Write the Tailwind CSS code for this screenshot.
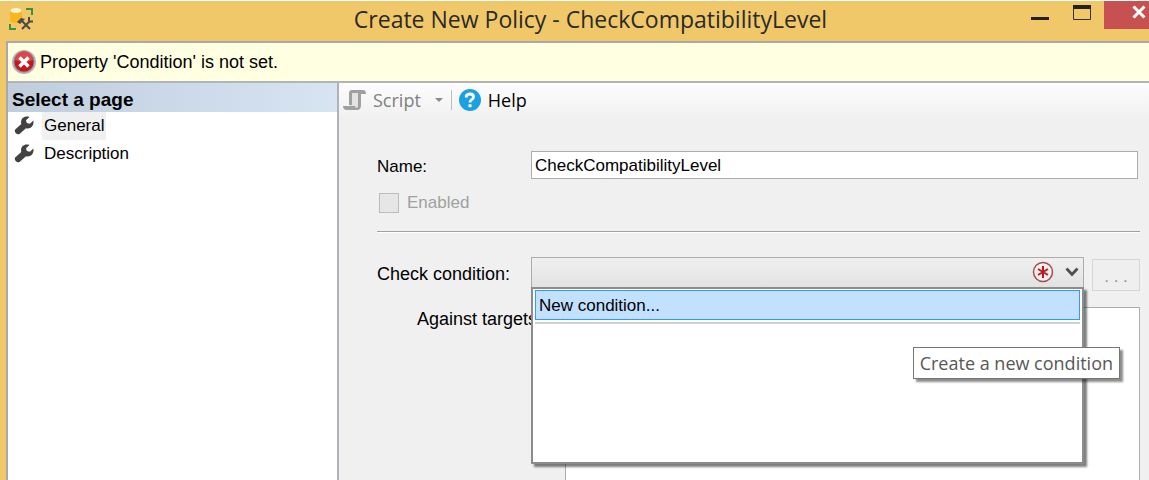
<!DOCTYPE html>
<html lang="en">
<head>
<meta charset="utf-8">
<title>Create New Policy - CheckCompatibilityLevel</title>
<script src="https://cdn.jsdelivr.net/npm/@tailwindcss/browser@4"></script>
</head>
<body class="flex h-screen flex-col overflow-hidden border-t border-white bg-[#f0c869] font-['Liberation_Sans',Arial,sans-serif] text-[17px] leading-5 text-black">
  <header class="flex h-10 shrink-0 items-start">
    <svg class="ml-2 mt-1.5 h-6 w-7 shrink-0" viewBox="0 0 28 24" fill="none" aria-hidden="true">
      <path d="M2 4v9c0 2 2.500 3 6 3s6-1 6-3V4z" fill="#f8b71f"/>
      <ellipse cx="8" cy="3.500" rx="5.500" ry="2.500" fill="#fff3d2"/>
      <path d="M18 2h6v6M2 17v5h6" stroke="#3d9142" stroke-width="2"/>
      <path d="M14 22l8-8M14 14l8 8" stroke="#4a4a48" stroke-width="2"/>
      <path d="M9 15l4-4 4 1-5 5z" fill="#4a4a48"/>
      <path d="M21 10v4.500h4" stroke="#4a4a48" stroke-width="2"/>
    </svg>
    <h1 class="flex-1 pl-[125px] text-center font-['Open_Sans','Noto_Sans',sans-serif] text-[23px] leading-9 text-[#2b2a27]">Create New Policy - CheckCompatibilityLevel</h1>
    <div class="flex shrink-0 items-start">
      <button class="flex h-7 w-10 justify-center" aria-label="Minimize"><svg class="h-7 w-5" viewBox="0 0 20 28"><path d="M1 16h18v3H1z" fill="#222"/></svg></button>
      <button class="flex h-7 w-11 justify-center" aria-label="Maximize"><svg class="h-7 w-5" viewBox="0 0 20 28"><path d="M1.500 5.500h17v13h-17z" fill="none" stroke="#333"/><path d="M1 4h18v4H1z" fill="#222"/></svg></button>
      <button class="flex h-7 w-[45px] items-start justify-end bg-[#c75050] pr-0.5" aria-label="Close"><svg class="h-6 w-4" viewBox="0 0 16 24"><path d="M2.500 5.500l11 11M13.500 5.500l-11 11" stroke="#fff" stroke-width="3"/></svg></button>
    </div>
  </header>

  <div class="ml-1.5 flex min-h-0 flex-1 flex-col border-l-2 border-t-2 border-[#a9a9ac] bg-[#f0f0f0]">
    <div class="flex h-10 shrink-0 items-center gap-1 border-b-2 border-[#b4b4b8] bg-[#ffffe1] pl-1 text-lg leading-5" role="alert">
      <svg class="size-6 shrink-0" viewBox="0 0 24 24" aria-hidden="true">
        <circle cx="12" cy="12" r="12" fill="#b4b4b4"/><circle cx="12" cy="12" r="10.500" fill="#8c8c8c"/>
        <circle cx="12" cy="12" r="9.500" fill="#c4161c"/><path d="M3 10a9 9 0 0 1 18 0q-9 4-18 0z" fill="#d8484c"/>
        <path d="M7.500 7.500l9 9M16.500 7.500l-9 9" stroke="#fff" stroke-width="3.500"/>
      </svg>
      <p>Property 'Condition' is not set.</p>
    </div>

    <div class="flex min-h-0 flex-1">
      <nav class="w-[331px] shrink-0 border-r-2 border-[#b0b2b8] bg-white">
        <h2 class="flex h-[29px] items-center bg-linear-to-r from-[#c0cddd] to-[#d7e4f2] pl-1 pt-1 text-[19px] font-bold">Select a page</h2>
        <ul>
          <li><a href="#general" class="flex h-7 items-center gap-2 pl-1.5"><svg class="size-5" viewBox="0 0 20 20" aria-hidden="true"><path d="M15.500 1C10-.800 6 3 7.300 8L1.200 13.500C-.500 15.500 3 19.500 5.500 18L12 12.300c4.500 1.200 8.500-2.500 7.300-7.800L16 7.800 12.800 7 12 4.300z" fill="#424242"/></svg><span class="bg-[#f0f0f0] px-0.5 py-1">General</span></a></li>
          <li><a href="#description" class="flex h-7 items-center gap-2 pl-1.5"><svg class="size-5" viewBox="0 0 20 20" aria-hidden="true"><path d="M15.500 1C10-.800 6 3 7.300 8L1.200 13.500C-.500 15.500 3 19.500 5.500 18L12 12.300c4.500 1.200 8.500-2.500 7.300-7.800L16 7.800 12.800 7 12 4.300z" fill="#424242"/></svg><span class="px-0.5 py-1">Description</span></a></li>
        </ul>
      </nav>

      <main id="general" class="flex min-w-0 flex-1 flex-col">
        <div class="flex h-9 shrink-0 items-center bg-linear-to-b from-[#fdfdfd] to-[#f0f0f0] pb-0.5 pl-1 font-['Open_Sans','Noto_Sans',sans-serif] text-lg">
          <button class="flex items-center gap-1.5 text-[#808080]" disabled>
            <svg class="size-6" viewBox="0 0 24 24" aria-hidden="true"><path d="M7 3h11v14c0 3-1 4-3 4H7z" fill="#e3e3e3"/><path d="M6 17V5q0-3 3-3h11q3 0 3 4h-5v11q0 5-4 5H4q-4 0-4-4h12q0 2 2 2 1 0 1-3V5H9v12z" fill="#a0a0a0"/></svg>
            Script
          </button>
          <button class="ml-3 flex h-6 w-3 items-center justify-center" aria-label="Script options" disabled><svg class="h-1 w-2" viewBox="0 0 8 4"><path d="M0 0h8L4 4z" fill="#8c8c8c"/></svg></button>
          <span class="ml-1.5 mr-1.5 h-5 w-px bg-[#bcbcbc]"></span>
          <button class="flex items-center gap-1.5">
            <svg class="size-6" viewBox="0 0 24 24" aria-hidden="true"><circle cx="12" cy="12" r="11" fill="#1ba1e2"/><path d="M8.300 9.500V8q1-2 3.700-2 3.500 0 3.500 3 0 1.500-1.800 2.600Q12 12.600 12 14.500" fill="none" stroke="#fff" stroke-width="2.800"/><path d="M10.500 16.300h3v2.900h-3z" fill="#fff"/></svg>
            Help
          </button>
        </div>

        <form class="flex min-h-0 flex-1 flex-col pl-[38px] pr-[9px] pt-8">
          <div class="flex h-7 items-center">
            <label for="name" class="w-[154px] shrink-0 pt-1">Name:</label>
            <input id="name" type="text" value="CheckCompatibilityLevel" class="mr-0.5 h-7 min-w-0 flex-1 border border-[#abadb3] bg-white px-[3px] pt-0.5">
          </div>
          <div class="mt-3 flex h-6 items-center gap-2 text-[#a0a0a0]">
            <input id="enabled" type="checkbox" disabled class="ml-0.5 size-5 appearance-none border border-[#bcbcbc] bg-[#e6e6e6]">
            <label for="enabled">Enabled</label>
          </div>
          <hr class="mt-4 h-0.5 border-b border-t border-b-white border-t-[#a0a0a0]">
          <div class="mt-6 flex items-start">
            <label for="condition" class="w-[154px] shrink-0 pt-[7px] text-lg leading-5">Check condition:</label>
            <div class="relative z-10 min-w-0 flex-1">
              <select id="condition" class="block h-[31px] w-full appearance-none border border-[#acacac] bg-linear-to-b from-[#f0f0f0] to-[#e2e2e2]"><option value=""></option></select>
              <div class="pointer-events-none absolute right-1 top-1 flex items-center gap-2.5">
                <svg class="size-[22px]" viewBox="0 0 22 22" aria-hidden="true"><circle cx="11" cy="11" r="9.500" fill="#f5f2f2" stroke="#a94b50" stroke-width="1.500"/><path d="M11 5v12M6 8l10 6M16 8L6 14" stroke="#c4161c" stroke-width="2"/></svg>
                <svg class="h-3 w-4" viewBox="0 0 16 12" aria-hidden="true"><path d="M2.500 2.500L8 8.500l5.500-6" fill="none" stroke="#505050" stroke-width="2.800"/></svg>
              </div>
              <div role="listbox" aria-label="Check condition" class="absolute left-0 top-[30px] h-[177px] w-full border-2 border-[#8c8c8c] bg-white px-0.5 pt-px shadow-[3px_3px_2px_rgba(0,0,0,0.5)]">
                <button type="button" role="option" aria-selected="true" class="flex h-[30px] w-full items-center border border-[#3399ff] bg-[#c2e0ff] px-[3px] pt-0.5">New condition...</button>
                <div class="mt-0.5 h-0.5 bg-[#d0d0d0]"></div>
                <div role="tooltip" class="absolute -right-[38px] top-[58px] whitespace-nowrap border border-[#767676] bg-white px-1.5 font-['Open_Sans','Noto_Sans',sans-serif] text-lg leading-[30px] text-[#575757] shadow-[3px_3px_2px_rgba(0,0,0,0.45)]">Create a new condition</div>
              </div>
            </div>
            <button type="button" disabled class="ml-2 flex h-8 w-12 mt-0.5 shrink-0 items-center justify-center border border-[#d6d6d6] bg-[#efefef] pt-1 text-[#9295a3]" aria-label="Edit condition">. . .</button>
          </div>
          <div class="mt-4 flex min-h-0 flex-1">
            <label for="targets" class="w-[188px] shrink-0 pl-10 pt-0.5 text-lg leading-5">Against targets:</label>
            <textarea id="targets" readonly class="min-w-0 flex-1 resize-none border border-b-0 border-[#abadb3] bg-white"></textarea>
          </div>
        </form>
      </main>
    </div>
  </div>
</body>
</html>
